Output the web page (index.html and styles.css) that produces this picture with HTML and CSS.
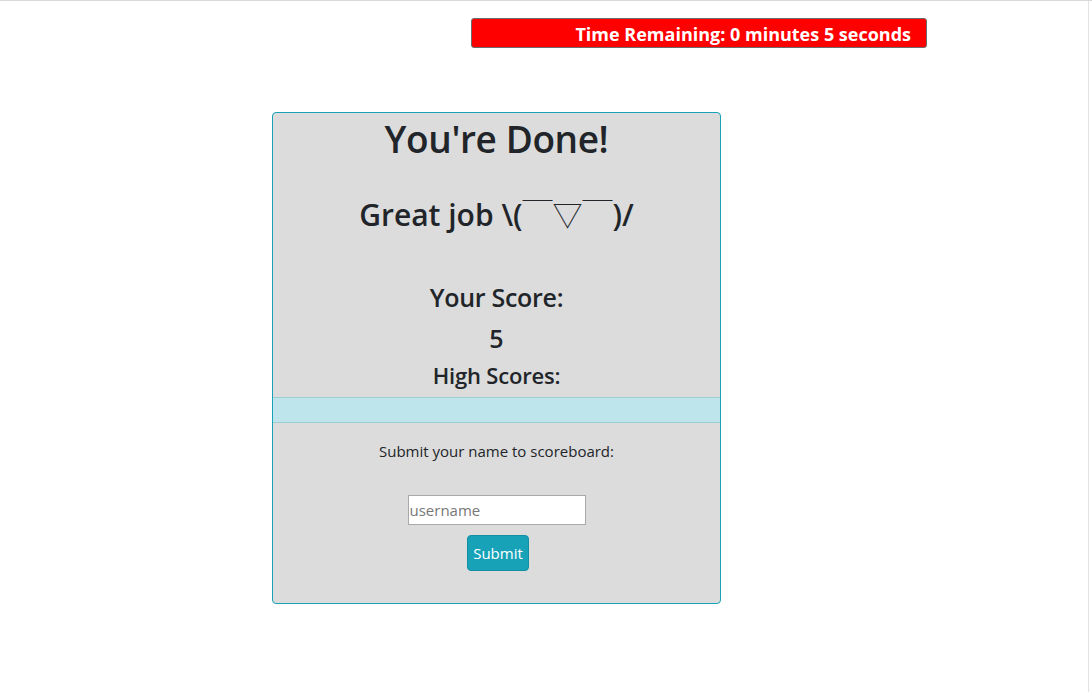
FILE: index.html
```html
<!DOCTYPE html>
<html>
<head>
<meta charset="utf-8">
<link rel="stylesheet" href="styles.css">
</head>
<body>
<div class="page">
  <div class="timer-row">
    <div class="timer">Time Remaining: 0 minutes 5 seconds</div>
  </div>
  <div class="card">
    <h1 class="title">You're Done!</h1>
    <h2 class="subtitle">Great job \(<span class="kao">￣▽￣</span>)/</h2>
    <h3 class="score-label">Your Score:</h3>
    <h3 class="score">5</h3>
    <h4 class="high-label">High Scores:</h4>
    <div class="scores-list"></div>
    <p class="submit-label">Submit your name to scoreboard:</p>
    <div class="form">
      <input class="name-input" type="text" placeholder="username">
      <button class="submit-btn">Submit</button>
    </div>
  </div>
</div>
</body>
</html>
```

FILE: styles.css
```css
html, body {
  margin: 0;
  padding: 0;
  background: #fff;
}
body {
  font-family: "Open Sans", "Noto Sans", sans-serif;
  color: #212529;
  border-top: 1px solid #d9d9d9;
}
.page {
  width: 1089px;
  height: 691px;
  border-right: 1px solid #e3e3e3;
  box-sizing: border-box;
}
.timer-row {
  display: flex;
  padding-top: 17px;
  padding-left: 471px;
}
.timer {
  width: 456px;
  height: 30px;
  box-sizing: border-box;
  background: #ff0000;
  border: 1px solid #6c6c6c;
  border-radius: 3px;
  color: #fff;
  font-weight: 700;
  font-size: 18px;
  line-height: 30px;
  text-align: right;
  padding-right: 15px;
}
.card {
  margin-top: 64px;
  margin-left: 272px;
  width: 449px;
  height: 492px;
  box-sizing: border-box;
  background: #dcdcdc;
  border: 1px solid #17a2b8;
  border-radius: 4px;
  text-align: center;
}
h1, h2, h3, h4, p { margin: 0; font-weight: 600; }
.title {
  font-size: 37px;
  line-height: 50px;
  letter-spacing: -0.4px;
  padding-top: 1px;
}
.subtitle {
  font-size: 30px;
  line-height: 40px;
  letter-spacing: 0;
  margin-top: 29px;
}
.kao {
  font-family: "Noto Sans CJK JP", sans-serif;
  font-weight: 300;
  letter-spacing: 0;
  font-size: 30px;
}
.score-label {
  font-size: 25px;
  line-height: 36px;
  letter-spacing: -0.3px;
  margin-top: 44px;
}
.score {
  font-size: 25px;
  line-height: 36px;
  margin-top: 5px;
}
.high-label {
  font-size: 22px;
  line-height: 30px;
  letter-spacing: -0.2px;
  margin-top: 4px;
}
.scores-list {
  margin-top: 7px;
  height: 26px;
  box-sizing: border-box;
  background: #bee5eb;
  border-top: 1px solid #9fcdd4;
  border-bottom: 1px solid #9fcdd4;
}
.submit-label {
  font-size: 15px;
  line-height: 24px;
  margin-top: 16px;
  font-weight: 400;
}
.form {
  display: flex;
  flex-direction: column;
  align-items: center;
  margin-top: 32px;
}
.name-input {
  width: 178px;
  height: 30px;
  box-sizing: border-box;
  border: 1px solid #a9a9a9;
  padding: 0 1px;
  font-family: inherit;
  font-size: 15px;
  background: #fff;
}
.name-input::placeholder { color: #777; }
.submit-btn {
  margin-top: 10px;
  margin-left: 3px;
  height: 36px;
  padding: 0 5px;
  background: #17a2b8;
  border: 1px solid #138fa3;
  border-radius: 4px;
  color: #fff;
  font-family: inherit;
  font-size: 15px;
}
```
